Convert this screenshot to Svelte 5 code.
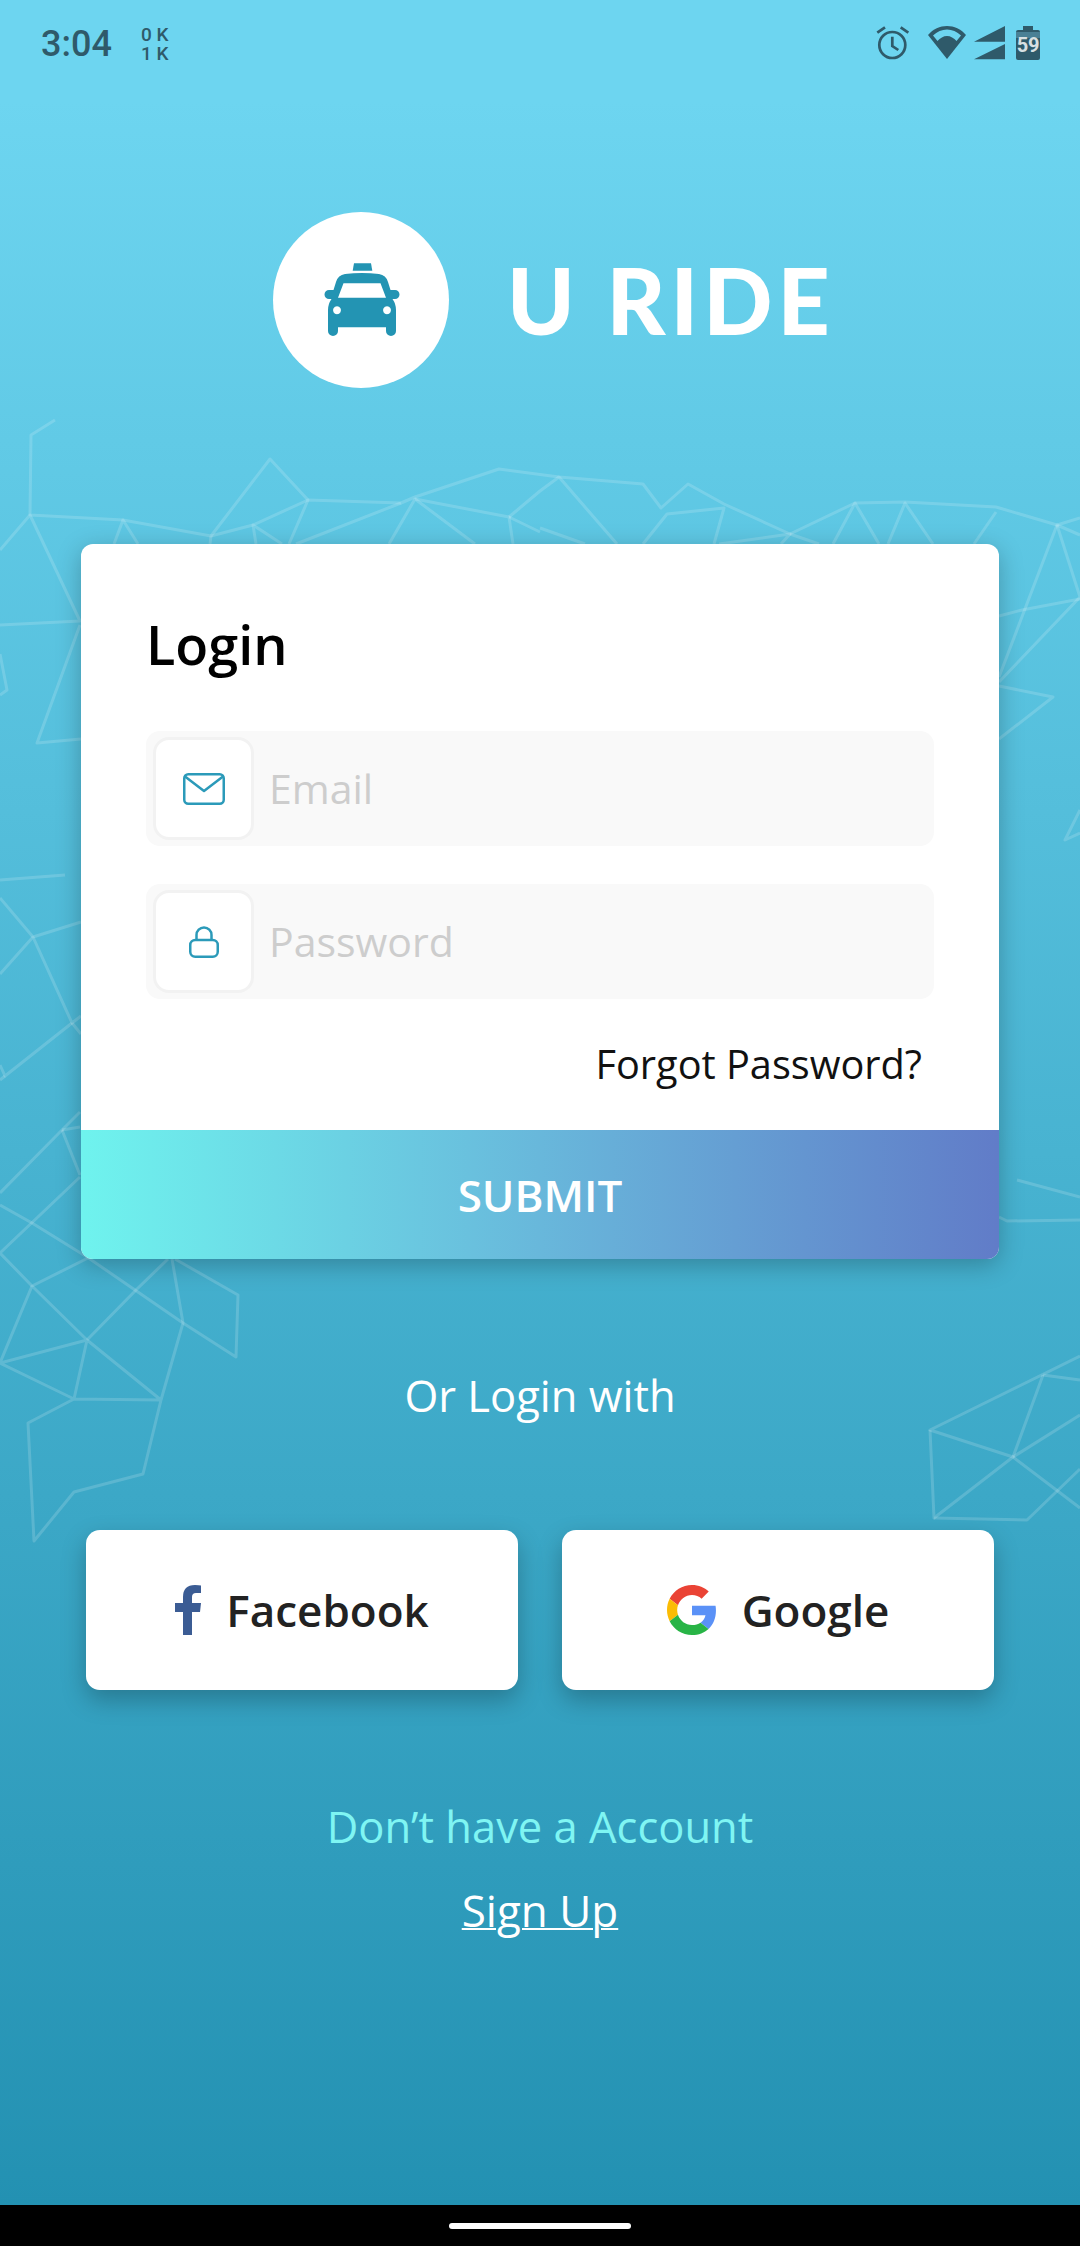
<script>
  const mesh = [
    "55,420 31,435 30,515 123,520 211,536 253,525 308,500 401,503 415,497 499,469 559,477 643,484 661,508 688,484 724,504 790,534 855,503 905,502 996,507 1057,525 1080,518",
    "211,536 270,459 308,500 289,544",
    "210,544 211,536",
    "114,544 123,520 138,544",
    "256,544 253,525 282,544",
    "296,544 401,503",
    "389,544 415,499 475,544",
    "415,499 509,517 513,544",
    "509,517 540,532",
    "509,517 540,491 559,477 617,544",
    "540,528 585,544",
    "643,544 667,514 724,508 714,544",
    "719,544 790,534 781,544",
    "790,534 819,544",
    "833,544 855,503 879,544",
    "888,544 905,503 933,544",
    "996,512 974,544",
    "1080,535 1057,525 999,677",
    "1057,525 1080,597 999,682",
    "999,616 1022,610 1080,599",
    "999,686 1053,697 999,739",
    "1080,810 1065,840 1080,833",
    "0,550 30,515 80,621 0,625",
    "80,625 37,743 81,739",
    "0,654 7,690 0,695",
    "0,880 65,875",
    "0,898 33,937 81,922",
    "0,974 33,937 72,1023 81,1016",
    "72,1023 81,1034",
    "72,1023 5,1076 0,1065",
    "5,1076 0,1080",
    "80,1112 62,1130 0,1193",
    "62,1130 80,1127",
    "62,1130 80,1175",
    "80,1177 0,1253 32,1286 88,1258",
    "0,1205 32,1223 87,1257 183,1323 161,1400 143,1474 74,1492 34,1541 28,1423 74,1399 161,1400 87,1340 32,1286 0,1363 87,1340 74,1399 0,1363",
    "87,1340 137,1289 168,1259",
    "172,1259 183,1323 236,1357 238,1295 175,1259",
    "1017,1180 1080,1197",
    "999,1217 1007,1221 1080,1220",
    "1080,1356 930,1430 1013,1457 1080,1508",
    "1043,1375 1080,1380",
    "1043,1375 1013,1457 934,1518 930,1430",
    "934,1518 1027,1520 1080,1469",
    "1013,1457 1080,1415"
  ];
</script>

<div class="page">
  <svg class="mesh" viewBox="0 0 1080 2246" aria-hidden="true">
    {#each mesh as points}
      <polyline {points} />
    {/each}
  </svg>

  <div class="status">
    <span class="time">3:04</span>
    <span class="speed">0 K<br />1 K</span>
    <span class="status-icons">
      <svg class="alarm" width="33" height="34" viewBox="0 0 33 34" fill="none" stroke="#2f5a6a" stroke-width="2.7">
        <circle cx="16.3" cy="19" r="13" />
        <path d="M16.3 10.7V20L22.3 24M1.3 6.7 9 1.3M24.7 1.3 32.3 6.7" />
      </svg>
      <svg width="38" height="33" viewBox="0 0 38 33">
        <path fill="#2f5a6a" d="M19 0C12 0 5 3 0 9L19 33 38 9C33 3 26 0 19 0Z" />
        <path fill="#6dd5f0" d="M5 9.5C9 5.5 14 3.5 19 3.5S29 5.5 33 9.5L28.5 15C26 12 22.5 10 19 10S12 12 9.5 15Z" />
      </svg>
      <svg width="31" height="34" viewBox="0 0 31 34" fill="#2f5a6a">
        <path d="M31 0V15.7H0ZM31 18V33.3H0Z" />
      </svg>
      <span class="battery"><i></i>59</span>
    </span>
  </div>

  <div class="brand">
    <div class="badge">
      <svg width="100" height="100" viewBox="0 0 100 100" fill="#2394b3">
        <path d="M43 13.3H60L61.3 20.7H41.7Z" />
        <path fill-rule="evenodd" d="M22.5 40L25 32Q27 25 34 24Q51 22 68 24Q75 25 77 32L79.5 40H84a4.5 4.5 0 0 1 0 9H81.5Q85 54 85 60V81a5 5 0 0 1-10 0V77.3H27V81a5 5 0 0 1-10 0V60Q17 54 20.5 49H18a4.5 4.5 0 0 1 0-9ZM32.5 33.3L27 47.7H75L69.5 33.3ZM26 56.3a4 4 0 1 0 .01 0ZM76 56.3a4 4 0 1 0 .01 0Z" />
      </svg>
    </div>
    <h1>U RIDE</h1>
  </div>

  <div class="card">
    <div class="form">
      <h2>Login</h2>
      <div class="field">
        <span class="field-icon">
          <svg width="42" height="32" viewBox="0 0 42 32" fill="none" stroke="#2b9ab9" stroke-width="2.5" stroke-linejoin="round">
            <rect x="1.25" y="1.25" width="39.5" height="29.5" rx="4" />
            <path d="M2 3.5 21 18 40 3.5" />
          </svg>
        </span>
        <span class="placeholder">Email</span>
      </div>
      <div class="field">
        <span class="field-icon">
          <svg class="lock" width="30" height="32" viewBox="0 0 30 32" fill="none" stroke="#2b9ab9" stroke-width="2.5">
            <rect x="1.25" y="14" width="27.5" height="16.75" rx="5" />
            <path d="M7.5 14V9a7.5 7.5 0 0 1 15 0v5" />
          </svg>
        </span>
        <span class="placeholder">Password</span>
      </div>
      <div class="forgot">Forgot Password?</div>
    </div>
    <div class="submit">SUBMIT</div>
  </div>

  <p class="or">Or Login with</p>

  <div class="socials">
    <div class="social">
      <svg width="26" height="50" viewBox="0 0 26 50" fill="#3b5c94">
        <path d="M17 50V27H25L26 18H17V12Q17 8 21 8H26V.5Q24 0 20 0Q8 0 8 12V18H0V27H8V50Z" />
      </svg>
      <span>Facebook</span>
    </div>
    <div class="social">
      <svg width="50" height="50" viewBox="0 0 48 48">
        <path fill="#EA4335" d="M24 9.5c3.54 0 6.71 1.22 9.21 3.6l6.85-6.85C35.9 2.38 30.47 0 24 0 14.62 0 6.51 5.38 2.56 13.22l7.98 6.19C12.43 13.72 17.74 9.5 24 9.5z" />
        <path fill="#5A91F7" d="M46.98 24.55c0-1.57-.15-3.09-.38-4.55H24v9.02h12.94c-.58 2.96-2.26 5.48-4.78 7.18l7.73 6c4.51-4.18 7.09-10.36 7.09-17.65z" />
        <path fill="#FBBC05" d="M10.53 28.59c-.48-1.45-.76-2.99-.76-4.59s.27-3.14.76-4.59l-7.98-6.19C.92 16.46 0 20.12 0 24c0 3.88.92 7.54 2.56 10.78l7.97-6.19z" />
        <path fill="#28B446" d="M24 48c6.48 0 11.93-2.13 15.89-5.81l-7.73-6c-2.15 1.45-4.92 2.3-8.16 2.3-6.26 0-11.57-4.22-13.47-9.91l-7.98 6.19C6.51 42.62 14.62 48 24 48z" />
      </svg>
      <span>Google</span>
    </div>
  </div>

  <p class="ask">Don’t have a Account</p>
  <p class="signup">Sign Up</p>

  <div class="nav"><i></i></div>
</div>

<style>
  :global(body) {
    margin: 0;
  }

  .page {
    position: relative;
    width: 1080px;
    height: 2246px;
    display: flex;
    flex-direction: column;
    overflow: hidden;
    font-family: "Open Sans", sans-serif;
    background: linear-gradient(#6dd5f0 0, #6dd5f0 100px, #2391b2 2205px);
  }

  .mesh {
    position: absolute;
    inset: 0;
    width: 1080px;
    height: 2246px;
  }

  .mesh polyline {
    fill: none;
    stroke: rgba(255, 255, 255, 0.16);
    stroke-width: 3;
    stroke-linejoin: round;
  }

  .status {
    position: relative;
    height: 88px;
    display: flex;
    align-items: flex-start;
    padding: 0 40px 0 41px;
    color: #2f5a6a;
  }

  .time {
    margin-top: 23px;
    font: 500 36px/42px Roboto, sans-serif;
  }

  .speed {
    margin: 25px 0 0 29px;
    font: 500 19px/19px Roboto, sans-serif;
  }

  .status-icons {
    margin: 26px 0 0 auto;
    display: flex;
    align-items: flex-start;
    gap: 8px;
  }

  .alarm {
    margin-right: 11px;
  }

  .battery {
    position: relative;
    width: 24px;
    height: 30px;
    margin: 4px 0 0 3px;
    display: block;
    background: linear-gradient(#2f5a6a 2px, #4a8095 2px, #4a8095 8px, #2f5a6a 8px);
    border-radius: 2px;
    color: #d8e0e2;
    text-align: center;
    font: 700 20px/31px Roboto, sans-serif;
    letter-spacing: -0.3px;
  }

  .battery i {
    position: absolute;
    top: -4px;
    left: 7px;
    width: 10px;
    height: 4px;
    background: #2f5a6a;
  }

  .brand {
    position: relative;
    margin: 124px 0 0 273px;
    display: flex;
    align-items: center;
    gap: 58px;
    height: 176px;
  }

  .badge {
    width: 176px;
    height: 176px;
    flex: none;
    border-radius: 50%;
    background: #fff;
    display: flex;
    align-items: center;
    justify-content: center;
  }

  h1 {
    margin: 0;
    color: #fff;
    font: 900 91px/100px Lato, sans-serif;
    letter-spacing: 5px;
  }

  .card {
    position: relative;
    width: 918px;
    height: 715px;
    margin: 156px auto 0;
    display: flex;
    flex-direction: column;
    background: #fff;
    border-radius: 12px;
    overflow: hidden;
    box-shadow: 0 6px 24px rgba(0, 0, 0, 0.25);
  }

  .form {
    flex: 1;
    padding: 0 65px;
  }

  h2 {
    margin: 65px 0 0;
    color: #000;
    font-size: 54px;
    line-height: 70px;
    font-weight: 600;
  }

  .field {
    height: 115px;
    margin-top: 38px;
    padding-left: 7px;
    display: flex;
    align-items: center;
    background: #f9f9f9;
    border-radius: 14px;
  }

  h2 + .field {
    margin-top: 52px;
  }

  .field-icon {
    width: 95px;
    height: 97px;
    flex: none;
    display: flex;
    align-items: center;
    justify-content: center;
    background: #fff;
    border: 3px solid #f2f2f2;
    border-radius: 16px;
  }

  .lock {
    margin-left: 1px;
  }

  .placeholder {
    margin: -2px 0 0 15px;
    color: #cdcdcd;
    font-size: 41px;
  }

  .forgot {
    margin: 39px 12px 0 0;
    text-align: right;
    color: #111;
    font-size: 39.7px;
    line-height: 52px;
  }

  .submit {
    height: 129px;
    flex: none;
    display: flex;
    align-items: center;
    justify-content: center;
    color: #fff;
    font-size: 44px;
    font-weight: 600;
    background: linear-gradient(90deg, #6ff3ee, #617cc8);
  }

  .or {
    position: relative;
    margin: 110px 0 0;
    text-align: center;
    color: #fff;
    font-size: 43.5px;
    line-height: 54px;
  }

  .socials {
    position: relative;
    margin: 107px auto 0;
    width: 908px;
    display: flex;
    gap: 44px;
  }

  .social {
    flex: 1;
    height: 160px;
    display: flex;
    align-items: center;
    justify-content: center;
    gap: 25px;
    background: #fff;
    border-radius: 14px;
    box-shadow: 0 10px 24px rgba(0, 0, 0, 0.25);
    color: #222;
    font-size: 44px;
    font-weight: 600;
  }

  .ask {
    position: relative;
    margin: 110px 0 0;
    text-align: center;
    color: #7ff5f3;
    font-size: 43.5px;
    line-height: 54px;
  }

  .signup {
    position: relative;
    margin: 29px 0 0;
    text-align: center;
    color: #fff;
    font-size: 44px;
    line-height: 54px;
    text-decoration: underline;
    text-decoration-thickness: 2px;
  }

  .nav {
    position: relative;
    margin-top: auto;
    height: 41px;
    flex: none;
    display: flex;
    justify-content: center;
    background: #000;
  }

  .nav i {
    width: 182px;
    height: 6px;
    margin-top: 18px;
    border-radius: 3px;
    background: #fff;
  }
</style>
